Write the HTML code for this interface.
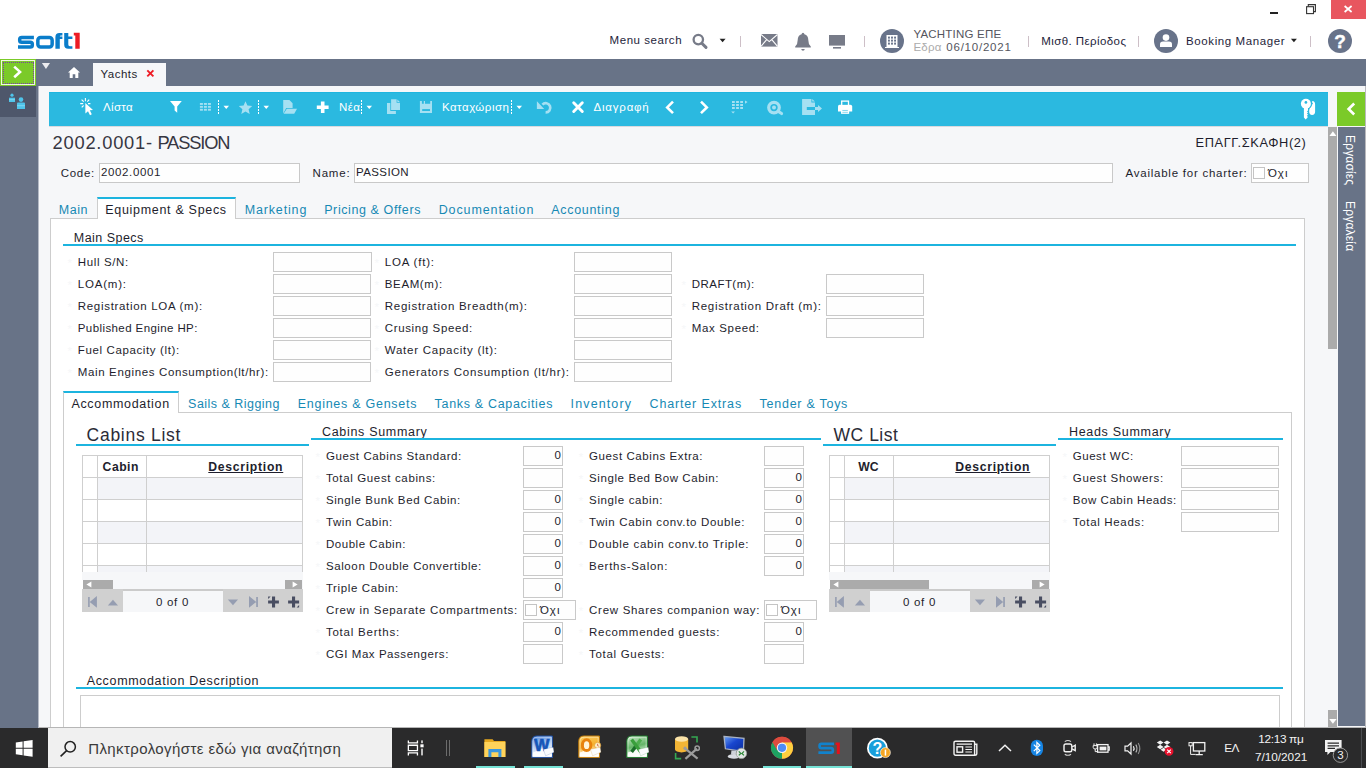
<!DOCTYPE html>
<html><head><meta charset="utf-8"><title>Yachts</title>
<style>
html,body{margin:0;padding:0;}
body{width:1366px;height:768px;overflow:hidden;position:relative;background:#fff;font-family:"Liberation Sans",sans-serif;}
.r{position:absolute;display:block;}
.t{position:absolute;white-space:nowrap;font-family:"Liberation Sans",sans-serif;}
</style></head><body>
<div class="r" style="left:0px;top:0px;width:1366px;height:59px;background:#ffffff;"></div>
<div class="r" style="left:0px;top:59px;width:1366px;height:27px;background:#687387;"></div>
<div class="r" style="left:39px;top:86px;width:1327px;height:1px;background:#a9afba;"></div>
<div class="r" style="left:0px;top:86px;width:39px;height:642px;background:#687387;"></div>
<div class="r" style="left:0px;top:85px;width:36px;height:32px;background:#4e576b;"></div>
<div class="r" style="left:39px;top:86px;width:1289px;height:642px;background:#f6f7f9;"></div>
<div class="r" style="left:1328px;top:86px;width:38px;height:642px;background:#f6f7f9;"></div>
<div class="r" style="left:1338px;top:127px;width:27px;height:599px;background:#687387;"></div>
<div class="r" style="left:1365px;top:86px;width:1px;height:642px;background:#b9b9bd;"></div>
<div class="r" style="left:1328px;top:127px;width:9px;height:222px;background:#ababab;"></div>
<div class="r" style="left:1337px;top:92px;width:28px;height:34px;background:#7bca29;"></div>
<div class="r" style="left:49px;top:92px;width:1279px;height:34px;background:#2bb9e0;"></div>
<div class="r" style="left:49px;top:92px;width:1279px;height:1px;background:#1fb5df;"></div>
<svg class="r" style="left:16px;top:31px;" width="66" height="20" viewBox="0 0 66 20">
<g fill="none" stroke="#0a7dca" stroke-width="3.5" stroke-linejoin="round">
<path d="M17.9,6.5 H5.7 Q3.7,6.5 3.7,8.2 V9.5 Q3.7,11.25 5.7,11.25 H14.3 Q16.3,11.25 16.3,13 V14.3 Q16.3,16.05 14.3,16.05 H2"/>
<rect x="21.85" y="6.5" width="14.3" height="9.55" rx="2.8"/>
</g>
<g fill="#0a7dca">
<path d="M39.4,17.8 V6 Q39.4,2 43.4,2 H46.4 V4.6 H45 Q43.8,4.6 43.8,5.6 H46.4 V8 H43.8 V17.8 Z"/>
<path d="M48.2,2 H52.3 V5.6 H56.4 V8 H52.3 V13.6 Q52.3,15.2 53.9,15.2 H56.4 V17.8 H52.2 Q48.2,17.8 48.2,13.8 Z"/>
</g>
<path fill="#ed1c24" d="M57.8,1.7 H63.7 V17.8 H59.3 V4.6 H57.8 Z"/>
</svg>
<div class="t " style="top:33px;font-size:11.5px;line-height:15px;color:#1e1e3a;left:609.60px;letter-spacing:0.547px;">Menu search</div>
<svg class="r" style="left:691px;top:32px;" width="18" height="18" viewBox="0 0 18 18"><circle cx="7.3" cy="7.6" r="4.7" fill="none" stroke="#777b88" stroke-width="2.3"/><path d="M10.8,11.2 L15,15.4" stroke="#777b88" stroke-width="3" stroke-linecap="round"/></svg>
<svg class="r" style="left:719px;top:38px;" width="8" height="5" viewBox="0 0 8 5"><path d="M0.6,0.8 H6.6 L3.6,4.2 Z" fill="#222"/></svg>
<div class="r" style="left:740px;top:36px;width:1px;height:11px;background:#cdbfc7;"></div>
<div class="r" style="left:864px;top:36px;width:1px;height:11px;background:#cdbfc7;"></div>
<div class="r" style="left:1028px;top:36px;width:1px;height:11px;background:#cdbfc7;"></div>
<div class="r" style="left:1138px;top:36px;width:1px;height:11px;background:#cdbfc7;"></div>
<div class="r" style="left:1310px;top:36px;width:1px;height:11px;background:#cdbfc7;"></div>
<svg class="r" style="left:760px;top:33px;" width="19" height="15" viewBox="0 0 19 15"><rect x="1" y="1" width="16.5" height="12.6" fill="#777b88"/><path d="M1,1.5 L9.25,8.6 L17.5,1.5 M1,13.4 L6.7,6.6 M17.5,13.4 L11.8,6.6" stroke="#fff" stroke-width="1.1" fill="none"/></svg>
<svg class="r" style="left:794px;top:32px;" width="18" height="20" viewBox="0 0 18 20"><path d="M9,0.7 Q10.3,0.7 10.4,2.2 Q14.3,3.3 14.3,8 Q14.3,12.5 16.8,14.6 V15.6 H1.2 V14.6 Q3.7,12.5 3.7,8 Q3.7,3.3 7.6,2.2 Q7.7,0.7 9,0.7 Z M7.2,17 H10.8 Q10.5,18.8 9,18.8 Q7.5,18.8 7.2,17 Z" fill="#777b88"/></svg>
<svg class="r" style="left:828px;top:34px;" width="18" height="16" viewBox="0 0 18 16"><rect x="1" y="1" width="16" height="10.6" fill="#777b88"/><rect x="5" y="13" width="8" height="1.6" fill="#777b88"/></svg>
<svg class="r" style="left:880px;top:29px;" width="24" height="24" viewBox="0 0 24 24"><circle cx="12" cy="12" r="12" fill="#68738a"/><path d="M6.5,6 H17.5 V18 H19 V19 H5 V18 H6.5 Z" fill="#fff"/><g fill="#68738a"><rect x="8" y="7.6" width="1.9" height="2"/><rect x="11.05" y="7.6" width="1.9" height="2"/><rect x="14.1" y="7.6" width="1.9" height="2"/><rect x="8" y="10.6" width="1.9" height="2"/><rect x="11.05" y="10.6" width="1.9" height="2"/><rect x="14.1" y="10.6" width="1.9" height="2"/><rect x="8" y="13.6" width="1.9" height="2"/><rect x="11.05" y="13.6" width="1.9" height="2"/><rect x="14.1" y="13.6" width="1.9" height="2"/></g></svg>
<div class="t " style="top:27px;font-size:11.5px;line-height:15px;color:#55565e;left:913.40px;letter-spacing:0.216px;">YACHTING ΕΠΕ</div>
<div class="t " style="top:40px;font-size:11.5px;line-height:15px;color:#ababab;left:913.40px;letter-spacing:0.259px;">Εδρα</div>
<div class="t " style="top:40px;font-size:11.5px;line-height:15px;color:#55565e;left:946.30px;letter-spacing:0.775px;">06/10/2021</div>
<div class="t " style="top:34px;font-size:11.5px;line-height:15px;color:#1e1e3a;left:1041.20px;letter-spacing:0.423px;">Μισθ. Περίοδος</div>
<svg class="r" style="left:1154px;top:29px;" width="24" height="24" viewBox="0 0 24 24"><circle cx="12" cy="12" r="12" fill="#68738a"/><circle cx="12" cy="8.6" r="3.3" fill="#fff"/><path d="M6,18 V15.2 Q6,12.6 9,12.6 H15 Q18,12.6 18,15.2 V18 Z" fill="#fff"/></svg>
<div class="t " style="top:34px;font-size:11.5px;line-height:15px;color:#1e1e3a;left:1186.00px;letter-spacing:0.604px;">Booking Manager</div>
<svg class="r" style="left:1290px;top:38px;" width="8" height="5" viewBox="0 0 8 5"><path d="M0.9,0.8 H6.9 L3.9,4.2 Z" fill="#222"/></svg>
<svg class="r" style="left:1328px;top:29px;" width="24" height="24" viewBox="0 0 24 24"><circle cx="12" cy="12" r="12" fill="#68738a"/><text x="12" y="18.8" text-anchor="middle" font-family="Liberation Sans" font-weight="bold" font-size="19" fill="#fff" stroke="#fff" stroke-width="0.4">?</text></svg>
<div class="r" style="left:1270px;top:11.5px;width:8.3px;height:2.6px;background:#222;"></div>
<svg class="r" style="left:1305px;top:3px;" width="12" height="12" viewBox="0 0 12 12"><path d="M3.3,3.6 V1.6 H10.4 V8.6 H8.4" fill="none" stroke="#333" stroke-width="1.1"/><rect x="1.6" y="3.7" width="6.9" height="6.9" fill="none" stroke="#333" stroke-width="1.1"/></svg>
<div class="r" style="left:1331px;top:0px;width:35px;height:19px;background:#e8565f;"></div>
<svg class="r" style="left:1343px;top:5px;" width="10" height="8" viewBox="0 0 10 8"><path d="M1.6,1 L8.6,7 M8.6,1 L1.6,7" stroke="#fff" stroke-width="1.7"/></svg>
<div class="r" style="left:0px;top:59px;width:36px;height:27px;background:#7bca29;box-shadow:inset 0 0 0 1px #7bca29, inset 0 0 0 2px #eef7e0;"></div>
<div class="r" style="left:3px;top:62px;width:30.5px;height:21.5px;border:1.5px dotted #7a3fa3;box-sizing:border-box;"></div>
<svg class="r" style="left:12px;top:64px;" width="12" height="16" viewBox="0 0 12 16"><path d="M2.2,2.6 L8,7.9 L2.2,13.2" fill="none" stroke="#fff" stroke-width="2.6" stroke-linejoin="miter"/></svg>
<svg class="r" style="left:41px;top:62px;" width="10" height="8" viewBox="0 0 10 8"><path d="M0.9,1.1 H9 L4.95,6.9 Z" fill="#ececef"/></svg>
<svg class="r" style="left:67px;top:66px;" width="14" height="13" viewBox="0 0 14 13"><path d="M7,0.9 L13,6.6 H11.3 V12 H8.3 V8.3 H5.7 V12 H2.7 V6.6 H1 Z" fill="#fff"/></svg>
<div class="r" style="left:93px;top:63px;width:73px;height:25px;background:#f6f7f9;"></div>
<div class="t " style="top:67px;font-size:11.5px;line-height:15px;color:#1e1e2d;left:100.60px;letter-spacing:0.449px;">Yachts</div>
<svg class="r" style="left:146px;top:69px;" width="9" height="9" viewBox="0 0 9 9"><path d="M1.3,1.3 L7.4,7.4 M7.4,1.3 L1.3,7.4" stroke="#ee1c25" stroke-width="1.9"/></svg>
<svg class="r" style="left:7px;top:92px;" width="22" height="20" viewBox="0 0 22 20"><g fill="#4fc4ea"><circle cx="5" cy="3.2" r="1.6"/><path d="M2,5.7 H8 V10 H2 Z"/><circle cx="14" cy="7.6" r="2.3"/><path d="M10,11.2 Q10,10.4 11,10.4 H17 Q18,10.4 18,11.2 V17 H10 Z"/></g><g fill="#7fd6f0"><rect x="2" y="7.2" width="6" height="1"/><rect x="10" y="13.2" width="8" height="1"/></g></svg>
<div class="r" style="left:37.5px;top:86px;width:1.5px;height:642px;background:linear-gradient(to right,#8a93a3,#dfe1e8);"></div>
<svg class="r" style="left:79px;top:97px;" width="16" height="19" viewBox="0 0 16 19"><g stroke="#fff" stroke-width="1.1" stroke-linecap="butt"><path d="M6.4,1 V4.2 M1.2,6.6 H4.2 M2.6,2.6 L4.7,4.7 M10.2,2.6 L8.3,4.6 M2.7,10.4 L4.6,8.5 M9,6.6 H11.4"/></g><path d="M6.3,6.1 L14,13 L10.8,13.3 L12.8,17.3 L11,18.2 L9,14.2 L6.4,16.4 Z" fill="#fff"/></svg>
<div class="t " style="top:100px;font-size:11.5px;line-height:15px;color:#ffffff;left:103.00px;letter-spacing:0.328px;">Λίστα</div>
<svg class="r" style="left:169px;top:100px;" width="14" height="14" viewBox="0 0 14 14"><path d="M1,1 H12.8 L8.2,6.4 V12.8 L5.6,10.6 V6.4 Z" fill="#fff"/></svg>
<svg class="r" style="left:199px;top:102px;" width="13" height="10" viewBox="0 0 13 10"><g fill="#a5e0f2"><rect x="0.9" y="1" width="3" height="1.9"/><rect x="4.9" y="1" width="3" height="1.9"/><rect x="8.9" y="1" width="3" height="1.9"/><rect x="0.9" y="3.9" width="3" height="1.9"/><rect x="4.9" y="3.9" width="3" height="1.9"/><rect x="8.9" y="3.9" width="3" height="1.9"/><rect x="0.9" y="6.8" width="3" height="1.9"/><rect x="4.9" y="6.8" width="3" height="1.9"/><rect x="8.9" y="6.8" width="3" height="1.9"/></g></svg>
<div class="r" style="left:218px;top:100px;width:1px;height:14px;background:repeating-linear-gradient(to bottom,#fff 0,#fff 2px,transparent 2px,transparent 3px);"></div>
<svg class="r" style="left:222.5px;top:105px;" width="7" height="5" viewBox="0 0 7 5"><path d="M0.5,0.7 H6 L3.25,4 Z" fill="#fff"/></svg>
<svg class="r" style="left:238px;top:100px;" width="15" height="15" viewBox="0 0 15 15"><path d="M7.5,1.2 L9.4,5.6 L14.2,6 L10.6,9.2 L11.7,13.9 L7.5,11.4 L3.3,13.9 L4.4,9.2 L0.8,6 L5.6,5.6 Z" fill="#a5e0f2"/></svg>
<div class="r" style="left:258px;top:100px;width:1px;height:14px;background:repeating-linear-gradient(to bottom,#fff 0,#fff 2px,transparent 2px,transparent 3px);"></div>
<svg class="r" style="left:262.5px;top:105px;" width="7" height="5" viewBox="0 0 7 5"><path d="M0.5,0.7 H6 L3.25,4 Z" fill="#fff"/></svg>
<svg class="r" style="left:282px;top:99px;" width="16" height="16" viewBox="0 0 16 16"><path d="M1.2,1 H7.4 L10.6,4.2 V9 H4.2 L1.2,14.4 Z" fill="#a5e0f2"/><path d="M4.8,9.8 H15 L12.2,14.8 H1.6 Z" fill="#a5e0f2"/></svg>
<svg class="r" style="left:316px;top:101px;" width="14" height="13" viewBox="0 0 14 13"><path d="M4.9,0.6 H8.5 V4.5 H12.6 V8.1 H8.5 V12 H4.9 V8.1 H0.8 V4.5 H4.9 Z" fill="#fff"/></svg>
<div class="t " style="top:100px;font-size:11.5px;line-height:15px;color:#ffffff;left:338.90px;letter-spacing:0.440px;">Νέα</div>
<div class="r" style="left:361px;top:100px;width:1px;height:14px;background:repeating-linear-gradient(to bottom,#fff 0,#fff 2px,transparent 2px,transparent 3px);"></div>
<svg class="r" style="left:366px;top:105px;" width="7" height="5" viewBox="0 0 7 5"><path d="M0.5,0.7 H6 L3.25,4 Z" fill="#fff"/></svg>
<svg class="r" style="left:386px;top:98px;" width="16" height="17" viewBox="0 0 16 17"><path d="M5.1,1.2 H10.6 V4.8 H14 V11.9 H5.1 Z" fill="#a5e0f2"/><path d="M11.4,1.4 L13.8,4 H11.4 Z" fill="#a5e0f2"/><path d="M1,5.1 H4.3 V13.1 H9.9 V15.9 H1 Z" fill="#a5e0f2"/></svg>
<svg class="r" style="left:419px;top:100px;" width="14" height="14" viewBox="0 0 14 14"><path d="M0.9,1 H2.9 V3.7 H4.8 V1 H6 V3.7 H11.2 V1 H13 V13 H0.9 Z" fill="#a5e0f2"/><rect x="3.2" y="9.1" width="7.8" height="1.9" fill="#2bb9e0"/></svg>
<div class="t " style="top:100px;font-size:11.5px;line-height:15px;color:#ffffff;left:441.90px;letter-spacing:0.510px;">Καταχώριση</div>
<div class="r" style="left:511px;top:100px;width:1px;height:14px;background:repeating-linear-gradient(to bottom,#fff 0,#fff 2px,transparent 2px,transparent 3px);"></div>
<svg class="r" style="left:515.7px;top:105px;" width="7" height="5" viewBox="0 0 7 5"><path d="M0.5,0.7 H6 L3.25,4 Z" fill="#fff"/></svg>
<svg class="r" style="left:536px;top:100px;" width="17" height="15" viewBox="0 0 17 15"><path d="M6.4,4.6 A4.6,4.6 0 1 1 9.6,12.4" fill="none" stroke="#a5e0f2" stroke-width="2.7"/><path d="M0.9,1.3 L8.2,8.9 H0.9 Z" fill="#a5e0f2"/></svg>
<svg class="r" style="left:571px;top:100px;" width="14" height="14" viewBox="0 0 14 14"><path d="M2.7,2.8 L11.3,11.5 M11.3,2.8 L2.7,11.5" stroke="#fff" stroke-width="2.9" stroke-linecap="round"/></svg>
<div class="t " style="top:100px;font-size:11.5px;line-height:15px;color:#ffffff;left:593.50px;letter-spacing:0.790px;">Διαγραφή</div>
<svg class="r" style="left:664px;top:100px;" width="12" height="15" viewBox="0 0 12 15"><path d="M9,1.6 L3.2,7.4 L9,13.2" fill="none" stroke="#fff" stroke-width="2.6"/></svg>
<svg class="r" style="left:698px;top:100px;" width="12" height="15" viewBox="0 0 12 15"><path d="M3,1.6 L8.8,7.4 L3,13.2" fill="none" stroke="#fff" stroke-width="2.6"/></svg>
<svg class="r" style="left:730px;top:100px;" width="19" height="15" viewBox="0 0 19 15"><g fill="#a5e0f2"><rect x="2" y="1" width="2.8" height="2"/><rect x="2" y="4" width="2.8" height="2"/><rect x="2" y="7" width="2.8" height="2"/><rect x="6.1" y="1" width="2.8" height="2"/><rect x="6.1" y="4" width="2.8" height="2"/><rect x="6.1" y="7" width="2.8" height="2"/><rect x="10.2" y="1" width="2.8" height="2"/><rect x="10.2" y="4" width="2.8" height="2"/><rect x="10.2" y="7" width="2.8" height="2"/><path d="M1.2,11.4 H5 L3.1,13.5 Z"/><path d="M15,0.4 V3.7 L17.6,2 Z"/></g></svg>
<svg class="r" style="left:766px;top:99.5px;" width="18" height="16" viewBox="0 0 18 16"><circle cx="8" cy="7.6" r="5.3" fill="none" stroke="#a5e0f2" stroke-width="3.2"/><circle cx="8" cy="7.6" r="2" fill="#a5e0f2"/><path d="M12,11.2 L15.6,13.6" stroke="#a5e0f2" stroke-width="3" stroke-linecap="round"/></svg>
<svg class="r" style="left:801px;top:98px;" width="22" height="18" viewBox="0 0 22 18"><path d="M1.1,0.9 H10.4 V4.4 H14 V9.1 H5.8 V11.9 H14 V17 H1.1 Z" fill="#a5e0f2"/><path d="M11.2,1 L13.9,3.6 H11.2 Z" fill="#a5e0f2"/><path d="M14,9.1 H17 V7 L21,10.5 L17,14 V11.9 H14 Z" fill="#a5e0f2"/></svg>
<svg class="r" style="left:837px;top:99.5px;" width="17" height="15" viewBox="0 0 17 15"><path d="M2.6,4.8 H13.4 Q15.2,4.8 15.2,6.6 V11.4 H1 V6.6 Q1,4.8 2.6,4.8 Z" fill="#fff"/><rect x="4.7" y="1.1" width="6.8" height="4.4" fill="#2bb9e0" stroke="#fff" stroke-width="1.3"/><rect x="4.7" y="9.8" width="6.8" height="3.4" fill="#2bb9e0" stroke="#fff" stroke-width="1.3"/><rect x="5" y="11.1" width="6" height="1.1" fill="#fff"/></svg>
<svg class="r" style="left:1300px;top:98px;" width="17" height="23" viewBox="0 0 17 23"><path d="M12.4,3.1 Q15.1,3.4 15.1,6.5 V13.8 Q15.1,16.9 12.1,16.9 Q9.2,16.9 9.2,13.8 V12.5 Q9.2,10.8 10.6,9.6 Q12.2,8 12,5.2 Q12,3.6 12.4,3.1 Z" fill="#fff"/><circle cx="5.9" cy="5.7" r="5.9" fill="#2bb9e0"/><circle cx="11.9" cy="5.4" r="1" fill="#2bb9e0"/><circle cx="5.9" cy="5.7" r="5" fill="#fff"/><circle cx="5.9" cy="4.4" r="1.35" fill="#2bb9e0"/><path d="M3.9,9 V19.6 L5.6,21.6 L7.6,19.6 V18.4 L6.8,17.8 L7.8,17 V16.2 L6.8,15.6 L7.8,14.8 V14 L6.8,13.4 L8,12.4 V9 Z" fill="#fff"/></svg>
<svg class="r" style="left:1345px;top:101px;" width="12" height="16" viewBox="0 0 12 16"><path d="M9.2,2.5 L3.6,8 L9.2,13.5" fill="none" stroke="#fff" stroke-width="2.6"/></svg>
<div class="r" style="left:49px;top:126px;width:1279px;height:1px;background:#d9dadf;"></div>
<div class="t " style="top:131px;font-size:18.3px;line-height:24px;color:#363642;left:52.60px;letter-spacing:0.770px;">2002.0001-</div>
<div class="t " style="top:131px;font-size:18.3px;line-height:24px;color:#363642;left:157.40px;letter-spacing:-1.143px;">PASSION</div>
<div class="t " style="top:134px;font-size:12.8px;line-height:17px;color:#1e1e2d;left:1195.50px;letter-spacing:0.623px;">ΕΠΑΓΓ.ΣΚΑΦΗ(2)</div>
<div class="t " style="top:166px;font-size:11.5px;line-height:15px;color:#1e1e2d;left:60.80px;letter-spacing:0.663px;">Code:</div>
<div class="r" style="left:99px;top:163px;width:201px;height:20px;background:#fefefe;border:1px solid #c9c9c9;box-sizing:border-box;"></div>
<div class="t " style="top:165px;font-size:11.5px;line-height:15px;color:#1e1e2d;left:101.00px;letter-spacing:0.627px;">2002.0001</div>
<div class="t " style="top:166px;font-size:11.5px;line-height:15px;color:#1e1e2d;left:312.50px;letter-spacing:0.826px;">Name:</div>
<div class="r" style="left:354px;top:163px;width:759px;height:20px;background:#fefefe;border:1px solid #c9c9c9;box-sizing:border-box;"></div>
<div class="t " style="top:165px;font-size:11.5px;line-height:15px;color:#1e1e2d;left:356.00px;letter-spacing:0.389px;">PASSION</div>
<div class="t " style="top:166px;font-size:11.5px;line-height:15px;color:#1e1e2d;left:1125.50px;letter-spacing:0.761px;">Available for charter:</div>
<div class="r" style="left:1251px;top:163px;width:58px;height:20px;background:#fefefe;border:1px solid #c9c9c9;box-sizing:border-box;"></div>
<div class="r" style="left:1253px;top:167px;width:12px;height:12px;background:#ffffff;border:1px solid #c4c4c4;box-sizing:border-box;"></div>
<div class="t " style="top:166px;font-size:11.5px;line-height:15px;color:#1e1e2d;left:1267.90px;letter-spacing:1.034px;">Όχι</div>
<div class="r" style="left:50px;top:218px;width:1255px;height:520px;background:#ffffff;border:1px solid #cdcdcd;box-sizing:border-box;"></div>
<div class="r" style="left:97px;top:197px;width:139px;height:22px;background:#ffffff;border:1px solid #cdcdcd;box-sizing:border-box;border-bottom:none;border-top:2px solid #1cb4df;"></div>
<div class="t " style="top:202px;font-size:12.5px;line-height:16px;color:#1689b4;left:58.80px;letter-spacing:0.526px;">Main</div>
<div class="t " style="top:202px;font-size:12.5px;line-height:16px;color:#1e1e2d;left:105.30px;letter-spacing:0.689px;">Equipment &amp; Specs</div>
<div class="t " style="top:202px;font-size:12.5px;line-height:16px;color:#1689b4;left:244.70px;letter-spacing:0.846px;">Marketing</div>
<div class="t " style="top:202px;font-size:12.5px;line-height:16px;color:#1689b4;left:324.20px;letter-spacing:0.594px;">Pricing &amp; Offers</div>
<div class="t " style="top:202px;font-size:12.5px;line-height:16px;color:#1689b4;left:438.70px;letter-spacing:0.886px;">Documentation</div>
<div class="t " style="top:202px;font-size:12.5px;line-height:16px;color:#1689b4;left:551.20px;letter-spacing:0.705px;">Accounting</div>
<div class="t " style="top:230px;font-size:12.5px;line-height:16px;color:#1e1e2d;left:73.80px;letter-spacing:0.469px;">Main Specs</div>
<div class="r" style="left:63px;top:244px;width:1233px;height:2px;background:#1cb4df;"></div>
<div class="t " style="top:255px;font-size:11.5px;line-height:15px;color:#1e1e2d;left:77.80px;letter-spacing:0.625px;">Hull S/N:</div>
<div class="t " style="top:256px;font-size:11.5px;line-height:15px;color:#f6f7f9;left:67.50px;">*</div>
<div class="r" style="left:273px;top:252px;width:99px;height:20px;background:#fefefe;border:1px solid #c9c9c9;box-sizing:border-box;"></div>
<div class="t " style="top:255px;font-size:11.5px;line-height:15px;color:#1e1e2d;left:384.80px;letter-spacing:0.798px;">LOA (ft):</div>
<div class="t " style="top:256px;font-size:11.5px;line-height:15px;color:#f6f7f9;left:374.50px;">*</div>
<div class="r" style="left:574px;top:252px;width:98px;height:20px;background:#fefefe;border:1px solid #c9c9c9;box-sizing:border-box;"></div>
<div class="t " style="top:277px;font-size:11.5px;line-height:15px;color:#1e1e2d;left:77.80px;letter-spacing:0.793px;">LOA(m):</div>
<div class="t " style="top:278px;font-size:11.5px;line-height:15px;color:#f6f7f9;left:67.50px;">*</div>
<div class="r" style="left:273px;top:274px;width:98px;height:20px;background:#fefefe;border:1px solid #c9c9c9;box-sizing:border-box;"></div>
<div class="t " style="top:277px;font-size:11.5px;line-height:15px;color:#1e1e2d;left:384.80px;letter-spacing:0.621px;">BEAM(m):</div>
<div class="t " style="top:278px;font-size:11.5px;line-height:15px;color:#f6f7f9;left:374.50px;">*</div>
<div class="r" style="left:574px;top:274px;width:98px;height:20px;background:#fefefe;border:1px solid #c9c9c9;box-sizing:border-box;"></div>
<div class="t " style="top:277px;font-size:11.5px;line-height:15px;color:#1e1e2d;left:691.70px;letter-spacing:0.471px;">DRAFT(m):</div>
<div class="t " style="top:278px;font-size:11.5px;line-height:15px;color:#f6f7f9;left:681.40px;">*</div>
<div class="r" style="left:826px;top:274px;width:98px;height:20px;background:#fefefe;border:1px solid #c9c9c9;box-sizing:border-box;"></div>
<div class="t " style="top:299px;font-size:11.5px;line-height:15px;color:#1e1e2d;left:77.80px;letter-spacing:0.687px;">Registration LOA (m):</div>
<div class="t " style="top:300px;font-size:11.5px;line-height:15px;color:#f6f7f9;left:67.50px;">*</div>
<div class="r" style="left:273px;top:296px;width:98px;height:20px;background:#fefefe;border:1px solid #c9c9c9;box-sizing:border-box;"></div>
<div class="t " style="top:299px;font-size:11.5px;line-height:15px;color:#1e1e2d;left:384.80px;letter-spacing:0.739px;">Registration Breadth(m):</div>
<div class="t " style="top:300px;font-size:11.5px;line-height:15px;color:#f6f7f9;left:374.50px;">*</div>
<div class="r" style="left:574px;top:296px;width:98px;height:20px;background:#fefefe;border:1px solid #c9c9c9;box-sizing:border-box;"></div>
<div class="t " style="top:299px;font-size:11.5px;line-height:15px;color:#1e1e2d;left:691.70px;letter-spacing:0.734px;">Registration Draft (m):</div>
<div class="t " style="top:300px;font-size:11.5px;line-height:15px;color:#f6f7f9;left:681.40px;">*</div>
<div class="r" style="left:826px;top:296px;width:98px;height:20px;background:#fefefe;border:1px solid #c9c9c9;box-sizing:border-box;"></div>
<div class="t " style="top:321px;font-size:11.5px;line-height:15px;color:#1e1e2d;left:77.80px;letter-spacing:0.406px;">Published Engine HP:</div>
<div class="t " style="top:322px;font-size:11.5px;line-height:15px;color:#f6f7f9;left:67.50px;">*</div>
<div class="r" style="left:273px;top:318px;width:98px;height:20px;background:#fefefe;border:1px solid #c9c9c9;box-sizing:border-box;"></div>
<div class="t " style="top:321px;font-size:11.5px;line-height:15px;color:#1e1e2d;left:384.80px;letter-spacing:0.624px;">Crusing Speed:</div>
<div class="t " style="top:322px;font-size:11.5px;line-height:15px;color:#f6f7f9;left:374.50px;">*</div>
<div class="r" style="left:574px;top:318px;width:98px;height:20px;background:#fefefe;border:1px solid #c9c9c9;box-sizing:border-box;"></div>
<div class="t " style="top:321px;font-size:11.5px;line-height:15px;color:#1e1e2d;left:691.70px;letter-spacing:0.663px;">Max Speed:</div>
<div class="t " style="top:322px;font-size:11.5px;line-height:15px;color:#f6f7f9;left:681.40px;">*</div>
<div class="r" style="left:826px;top:318px;width:98px;height:20px;background:#fefefe;border:1px solid #c9c9c9;box-sizing:border-box;"></div>
<div class="t " style="top:343px;font-size:11.5px;line-height:15px;color:#1e1e2d;left:77.80px;letter-spacing:0.626px;">Fuel Capacity (lt):</div>
<div class="t " style="top:344px;font-size:11.5px;line-height:15px;color:#f6f7f9;left:67.50px;">*</div>
<div class="r" style="left:273px;top:340px;width:98px;height:20px;background:#fefefe;border:1px solid #c9c9c9;box-sizing:border-box;"></div>
<div class="t " style="top:343px;font-size:11.5px;line-height:15px;color:#1e1e2d;left:384.80px;letter-spacing:0.751px;">Water Capacity (lt):</div>
<div class="t " style="top:344px;font-size:11.5px;line-height:15px;color:#f6f7f9;left:374.50px;">*</div>
<div class="r" style="left:574px;top:340px;width:98px;height:20px;background:#fefefe;border:1px solid #c9c9c9;box-sizing:border-box;"></div>
<div class="t " style="top:365px;font-size:11.5px;line-height:15px;color:#1e1e2d;left:77.80px;letter-spacing:0.636px;">Main Engines Consumption(lt/hr):</div>
<div class="t " style="top:366px;font-size:11.5px;line-height:15px;color:#f6f7f9;left:67.50px;">*</div>
<div class="r" style="left:273px;top:362px;width:98px;height:20px;background:#fefefe;border:1px solid #c9c9c9;box-sizing:border-box;"></div>
<div class="t " style="top:365px;font-size:11.5px;line-height:15px;color:#1e1e2d;left:384.80px;letter-spacing:0.752px;">Generators Consumption (lt/hr):</div>
<div class="t " style="top:366px;font-size:11.5px;line-height:15px;color:#f6f7f9;left:374.50px;">*</div>
<div class="r" style="left:574px;top:362px;width:98px;height:20px;background:#fefefe;border:1px solid #c9c9c9;box-sizing:border-box;"></div>
<div class="r" style="left:63px;top:412px;width:1229px;height:330px;background:#ffffff;border:1px solid #cdcdcd;box-sizing:border-box;"></div>
<div class="r" style="left:63px;top:391px;width:116px;height:22px;background:#ffffff;border:1px solid #cdcdcd;box-sizing:border-box;border-bottom:none;border-top:2px solid #1cb4df;"></div>
<div class="t " style="top:396px;font-size:12.5px;line-height:16px;color:#1e1e2d;left:71.40px;letter-spacing:0.675px;">Accommodation</div>
<div class="t " style="top:396px;font-size:12.5px;line-height:16px;color:#1689b4;left:188.10px;letter-spacing:0.469px;">Sails &amp; Rigging</div>
<div class="t " style="top:396px;font-size:12.5px;line-height:16px;color:#1689b4;left:297.70px;letter-spacing:0.735px;">Engines &amp; Gensets</div>
<div class="t " style="top:396px;font-size:12.5px;line-height:16px;color:#1689b4;left:434.60px;letter-spacing:0.678px;">Tanks &amp; Capacities</div>
<div class="t " style="top:396px;font-size:12.5px;line-height:16px;color:#1689b4;left:570.60px;letter-spacing:1.120px;">Inventory</div>
<div class="t " style="top:396px;font-size:12.5px;line-height:16px;color:#1689b4;left:649.50px;letter-spacing:0.851px;">Charter Extras</div>
<div class="t " style="top:396px;font-size:12.5px;line-height:16px;color:#1689b4;left:759.60px;letter-spacing:0.732px;">Tender &amp; Toys</div>
<div class="r" style="left:76px;top:444px;width:233px;height:2px;background:#1cb4df;"></div>
<div class="t " style="top:424px;font-size:17.5px;line-height:23px;color:#2b2b36;left:86.60px;letter-spacing:0.721px;">Cabins List</div>
<div class="r" style="left:82px;top:455px;width:221px;height:117px;background:#ffffff;"></div>
<div class="r" style="left:98px;top:478px;width:204px;height:21px;background:#f3f4f8;"></div>
<div class="r" style="left:98px;top:522px;width:204px;height:21px;background:#f3f4f8;"></div>
<div class="r" style="left:98px;top:566px;width:204px;height:6px;background:#f3f4f8;"></div>
<div class="r" style="left:82px;top:455px;width:221px;height:1px;background:#cfcfcf;"></div>
<div class="r" style="left:82px;top:477px;width:221px;height:1px;background:#cfcfcf;"></div>
<div class="r" style="left:82px;top:499px;width:221px;height:1px;background:#cfcfcf;"></div>
<div class="r" style="left:82px;top:521px;width:221px;height:1px;background:#cfcfcf;"></div>
<div class="r" style="left:82px;top:543px;width:221px;height:1px;background:#cfcfcf;"></div>
<div class="r" style="left:82px;top:565px;width:221px;height:1px;background:#cfcfcf;"></div>
<div class="r" style="left:82px;top:455px;width:1px;height:117px;background:#cfcfcf;"></div>
<div class="r" style="left:97px;top:455px;width:1px;height:117px;background:#cfcfcf;"></div>
<div class="r" style="left:146px;top:455px;width:1px;height:117px;background:#cfcfcf;"></div>
<div class="r" style="left:302px;top:455px;width:1px;height:117px;background:#cfcfcf;"></div>
<div class="t " style="top:459px;font-size:12.2px;line-height:16px;color:#1e1e2d;left:102.60px;letter-spacing:0.502px;font-weight:bold;">Cabin</div>
<div class="t " style="top:459px;font-size:12.2px;line-height:16px;color:#1e1e2d;left:208.30px;letter-spacing:0.718px;font-weight:bold;text-decoration:underline;text-underline-offset:1px;">Description</div>
<div class="r" style="left:82px;top:572px;width:221px;height:8px;background:#f6f7f9;"></div>
<div class="r" style="left:83px;top:580px;width:220px;height:9px;background:#f6f7f9;"></div>
<div class="r" style="left:83px;top:580px;width:30px;height:9px;background:#ababab;"></div>
<div class="r" style="left:285px;top:580px;width:17px;height:9px;background:#ababab;"></div>
<svg class="r" style="left:85.4px;top:581px;" width="8" height="7" viewBox="0 0 8 7"><path d="M6.4,0.5 V6.5 L1.4,3.5 Z" fill="#fff"/></svg>
<svg class="r" style="left:290px;top:581px;" width="8" height="7" viewBox="0 0 8 7"><path d="M2.6,0.5 V6.5 L7.6,3.5 Z" fill="#fff"/></svg>
<div class="r" style="left:82px;top:589px;width:221px;height:23px;background:#f6f7f9;"></div>
<div class="r" style="left:82px;top:589px;width:221px;height:1.5px;background:#cbcbcb;"></div>
<div class="r" style="left:82px;top:589px;width:41px;height:23px;background:#d0d0d0;"></div>
<div class="r" style="left:223px;top:589px;width:80px;height:23px;background:#d0d0d0;"></div>
<svg class="r" style="left:87px;top:595px;" width="12" height="14" viewBox="0 0 12 14"><path d="M1.1,1.9 H2.7 V12 H1.1 Z M9.9,1 V12.8 L2.7,6.9 Z" fill="#959db1"/></svg>
<svg class="r" style="left:107px;top:598.5px;" width="12" height="8" viewBox="0 0 12 8"><path d="M0.9,6.5 H11 L5.95,0.8 Z" fill="#959db1"/></svg>
<svg class="r" style="left:227px;top:598.5px;" width="12" height="8" viewBox="0 0 12 8"><path d="M0.9,0.5 H11 L5.95,6.3 Z" fill="#959db1"/></svg>
<svg class="r" style="left:248px;top:595px;" width="12" height="14" viewBox="0 0 12 14"><path d="M8.2,1.9 H9.9 V12 H8.2 Z M1,1 V12.8 L8.2,6.9 Z" fill="#959db1"/></svg>
<svg class="r" style="left:268px;top:595.5px;" width="12" height="12" viewBox="0 0 12 12"><path d="M4,0.5 H7.1 V4.5 H10.9 V7.6 H7.1 V11.5 H4 V7.6 H0.1 V4.5 H4 Z" fill="#494e62"/><path d="M0.1,0.5 H2.6 L0.1,3 Z" fill="#494e62"/></svg>
<svg class="r" style="left:288px;top:595.5px;" width="12" height="12" viewBox="0 0 12 12"><path d="M4,0.5 H7.1 V4.5 H11.1 V7.6 H7.1 V11.5 H4 V7.6 H0.1 V4.5 H4 Z" fill="#494e62"/><path d="M11.1,9 V11.5 H8.6 Z" fill="#494e62"/></svg>
<div class="t " style="top:595px;font-size:11.5px;line-height:15px;color:#1e1e2d;left:156.00px;letter-spacing:0.705px;">0 of 0</div>
<div class="r" style="left:823px;top:444px;width:233px;height:2px;background:#1cb4df;"></div>
<div class="t " style="top:424px;font-size:17.5px;line-height:23px;color:#2b2b36;left:833.60px;letter-spacing:0.507px;">WC List</div>
<div class="r" style="left:829px;top:455px;width:221px;height:117px;background:#ffffff;"></div>
<div class="r" style="left:845px;top:478px;width:204px;height:21px;background:#f3f4f8;"></div>
<div class="r" style="left:845px;top:522px;width:204px;height:21px;background:#f3f4f8;"></div>
<div class="r" style="left:845px;top:566px;width:204px;height:6px;background:#f3f4f8;"></div>
<div class="r" style="left:829px;top:455px;width:221px;height:1px;background:#cfcfcf;"></div>
<div class="r" style="left:829px;top:477px;width:221px;height:1px;background:#cfcfcf;"></div>
<div class="r" style="left:829px;top:499px;width:221px;height:1px;background:#cfcfcf;"></div>
<div class="r" style="left:829px;top:521px;width:221px;height:1px;background:#cfcfcf;"></div>
<div class="r" style="left:829px;top:543px;width:221px;height:1px;background:#cfcfcf;"></div>
<div class="r" style="left:829px;top:565px;width:221px;height:1px;background:#cfcfcf;"></div>
<div class="r" style="left:829px;top:455px;width:1px;height:117px;background:#cfcfcf;"></div>
<div class="r" style="left:844px;top:455px;width:1px;height:117px;background:#cfcfcf;"></div>
<div class="r" style="left:893px;top:455px;width:1px;height:117px;background:#cfcfcf;"></div>
<div class="r" style="left:1049px;top:455px;width:1px;height:117px;background:#cfcfcf;"></div>
<div class="t " style="top:459px;font-size:12.2px;line-height:16px;color:#1e1e2d;left:858.20px;letter-spacing:0.038px;font-weight:bold;">WC</div>
<div class="t " style="top:459px;font-size:12.2px;line-height:16px;color:#1e1e2d;left:955.30px;letter-spacing:0.718px;font-weight:bold;text-decoration:underline;text-underline-offset:1px;">Description</div>
<div class="r" style="left:829px;top:572px;width:221px;height:8px;background:#f6f7f9;"></div>
<div class="r" style="left:830px;top:580px;width:220px;height:9px;background:#f6f7f9;"></div>
<div class="r" style="left:830px;top:580px;width:99px;height:9px;background:#ababab;"></div>
<div class="r" style="left:1032px;top:580px;width:17px;height:9px;background:#ababab;"></div>
<svg class="r" style="left:832.4px;top:581px;" width="8" height="7" viewBox="0 0 8 7"><path d="M6.4,0.5 V6.5 L1.4,3.5 Z" fill="#fff"/></svg>
<svg class="r" style="left:1037px;top:581px;" width="8" height="7" viewBox="0 0 8 7"><path d="M2.6,0.5 V6.5 L7.6,3.5 Z" fill="#fff"/></svg>
<div class="r" style="left:829px;top:589px;width:221px;height:23px;background:#f6f7f9;"></div>
<div class="r" style="left:829px;top:589px;width:221px;height:1.5px;background:#cbcbcb;"></div>
<div class="r" style="left:829px;top:589px;width:41px;height:23px;background:#d0d0d0;"></div>
<div class="r" style="left:970px;top:589px;width:80px;height:23px;background:#d0d0d0;"></div>
<svg class="r" style="left:834px;top:595px;" width="12" height="14" viewBox="0 0 12 14"><path d="M1.1,1.9 H2.7 V12 H1.1 Z M9.9,1 V12.8 L2.7,6.9 Z" fill="#959db1"/></svg>
<svg class="r" style="left:854px;top:598.5px;" width="12" height="8" viewBox="0 0 12 8"><path d="M0.9,6.5 H11 L5.95,0.8 Z" fill="#959db1"/></svg>
<svg class="r" style="left:974px;top:598.5px;" width="12" height="8" viewBox="0 0 12 8"><path d="M0.9,0.5 H11 L5.95,6.3 Z" fill="#959db1"/></svg>
<svg class="r" style="left:995px;top:595px;" width="12" height="14" viewBox="0 0 12 14"><path d="M8.2,1.9 H9.9 V12 H8.2 Z M1,1 V12.8 L8.2,6.9 Z" fill="#959db1"/></svg>
<svg class="r" style="left:1015px;top:595.5px;" width="12" height="12" viewBox="0 0 12 12"><path d="M4,0.5 H7.1 V4.5 H10.9 V7.6 H7.1 V11.5 H4 V7.6 H0.1 V4.5 H4 Z" fill="#494e62"/><path d="M0.1,0.5 H2.6 L0.1,3 Z" fill="#494e62"/></svg>
<svg class="r" style="left:1035px;top:595.5px;" width="12" height="12" viewBox="0 0 12 12"><path d="M4,0.5 H7.1 V4.5 H11.1 V7.6 H7.1 V11.5 H4 V7.6 H0.1 V4.5 H4 Z" fill="#494e62"/><path d="M11.1,9 V11.5 H8.6 Z" fill="#494e62"/></svg>
<div class="t " style="top:595px;font-size:11.5px;line-height:15px;color:#1e1e2d;left:903.00px;letter-spacing:0.705px;">0 of 0</div>
<div class="t " style="top:424px;font-size:12.5px;line-height:16px;color:#1e1e2d;left:322.00px;letter-spacing:0.688px;">Cabins Summary</div>
<div class="r" style="left:311px;top:438px;width:510px;height:2px;background:#1cb4df;"></div>
<div class="t " style="top:449px;font-size:11.5px;line-height:15px;color:#1e1e2d;left:325.90px;letter-spacing:0.603px;">Guest Cabins Standard:</div>
<div class="t " style="top:450px;font-size:11.5px;line-height:15px;color:#f6f7f9;left:315.60px;">*</div>
<div class="r" style="left:523px;top:446px;width:40px;height:20px;background:#fefefe;border:1px solid #c9c9c9;box-sizing:border-box;"></div>
<div class="t " style="top:448px;font-size:11.5px;line-height:15px;color:#1e1e2d;right:805.20px;">0</div>
<div class="t " style="top:449px;font-size:11.5px;line-height:15px;color:#1e1e2d;left:589.10px;letter-spacing:0.584px;">Guest Cabins Extra:</div>
<div class="t " style="top:450px;font-size:11.5px;line-height:15px;color:#f6f7f9;left:578.80px;">*</div>
<div class="r" style="left:764px;top:446px;width:40px;height:20px;background:#fefefe;border:1px solid #c9c9c9;box-sizing:border-box;"></div>
<div class="t " style="top:471px;font-size:11.5px;line-height:15px;color:#1e1e2d;left:325.90px;letter-spacing:0.642px;">Total Guest cabins:</div>
<div class="t " style="top:472px;font-size:11.5px;line-height:15px;color:#f6f7f9;left:315.60px;">*</div>
<div class="r" style="left:523px;top:468px;width:40px;height:20px;background:#fefefe;border:1px solid #c9c9c9;box-sizing:border-box;"></div>
<div class="t " style="top:471px;font-size:11.5px;line-height:15px;color:#1e1e2d;left:589.10px;letter-spacing:0.589px;">Single Bed Bow Cabin:</div>
<div class="t " style="top:472px;font-size:11.5px;line-height:15px;color:#f6f7f9;left:578.80px;">*</div>
<div class="r" style="left:764px;top:468px;width:40px;height:20px;background:#fefefe;border:1px solid #c9c9c9;box-sizing:border-box;"></div>
<div class="t " style="top:470px;font-size:11.5px;line-height:15px;color:#1e1e2d;right:564.20px;">0</div>
<div class="t " style="top:493px;font-size:11.5px;line-height:15px;color:#1e1e2d;left:325.90px;letter-spacing:0.615px;">Single Bunk Bed Cabin:</div>
<div class="t " style="top:494px;font-size:11.5px;line-height:15px;color:#f6f7f9;left:315.60px;">*</div>
<div class="r" style="left:523px;top:490px;width:40px;height:20px;background:#fefefe;border:1px solid #c9c9c9;box-sizing:border-box;"></div>
<div class="t " style="top:492px;font-size:11.5px;line-height:15px;color:#1e1e2d;right:805.20px;">0</div>
<div class="t " style="top:493px;font-size:11.5px;line-height:15px;color:#1e1e2d;left:589.10px;letter-spacing:0.627px;">Single cabin:</div>
<div class="t " style="top:494px;font-size:11.5px;line-height:15px;color:#f6f7f9;left:578.80px;">*</div>
<div class="r" style="left:764px;top:490px;width:40px;height:20px;background:#fefefe;border:1px solid #c9c9c9;box-sizing:border-box;"></div>
<div class="t " style="top:492px;font-size:11.5px;line-height:15px;color:#1e1e2d;right:564.20px;">0</div>
<div class="t " style="top:515px;font-size:11.5px;line-height:15px;color:#1e1e2d;left:325.90px;letter-spacing:0.629px;">Twin Cabin:</div>
<div class="t " style="top:516px;font-size:11.5px;line-height:15px;color:#f6f7f9;left:315.60px;">*</div>
<div class="r" style="left:523px;top:512px;width:40px;height:20px;background:#fefefe;border:1px solid #c9c9c9;box-sizing:border-box;"></div>
<div class="t " style="top:514px;font-size:11.5px;line-height:15px;color:#1e1e2d;right:805.20px;">0</div>
<div class="t " style="top:515px;font-size:11.5px;line-height:15px;color:#1e1e2d;left:589.10px;letter-spacing:0.649px;">Twin Cabin conv.to Double:</div>
<div class="t " style="top:516px;font-size:11.5px;line-height:15px;color:#f6f7f9;left:578.80px;">*</div>
<div class="r" style="left:764px;top:512px;width:40px;height:20px;background:#fefefe;border:1px solid #c9c9c9;box-sizing:border-box;"></div>
<div class="t " style="top:514px;font-size:11.5px;line-height:15px;color:#1e1e2d;right:564.20px;">0</div>
<div class="t " style="top:537px;font-size:11.5px;line-height:15px;color:#1e1e2d;left:325.90px;letter-spacing:0.548px;">Double Cabin:</div>
<div class="t " style="top:538px;font-size:11.5px;line-height:15px;color:#f6f7f9;left:315.60px;">*</div>
<div class="r" style="left:523px;top:534px;width:40px;height:20px;background:#fefefe;border:1px solid #c9c9c9;box-sizing:border-box;"></div>
<div class="t " style="top:536px;font-size:11.5px;line-height:15px;color:#1e1e2d;right:805.20px;">0</div>
<div class="t " style="top:537px;font-size:11.5px;line-height:15px;color:#1e1e2d;left:589.10px;letter-spacing:0.677px;">Double cabin conv.to Triple:</div>
<div class="t " style="top:538px;font-size:11.5px;line-height:15px;color:#f6f7f9;left:578.80px;">*</div>
<div class="r" style="left:764px;top:534px;width:40px;height:20px;background:#fefefe;border:1px solid #c9c9c9;box-sizing:border-box;"></div>
<div class="t " style="top:536px;font-size:11.5px;line-height:15px;color:#1e1e2d;right:564.20px;">0</div>
<div class="t " style="top:559px;font-size:11.5px;line-height:15px;color:#1e1e2d;left:325.90px;letter-spacing:0.615px;">Saloon Double Convertible:</div>
<div class="t " style="top:560px;font-size:11.5px;line-height:15px;color:#f6f7f9;left:315.60px;">*</div>
<div class="r" style="left:523px;top:556px;width:40px;height:20px;background:#fefefe;border:1px solid #c9c9c9;box-sizing:border-box;"></div>
<div class="t " style="top:558px;font-size:11.5px;line-height:15px;color:#1e1e2d;right:805.20px;">0</div>
<div class="t " style="top:559px;font-size:11.5px;line-height:15px;color:#1e1e2d;left:589.10px;letter-spacing:0.717px;">Berths-Salon:</div>
<div class="t " style="top:560px;font-size:11.5px;line-height:15px;color:#f6f7f9;left:578.80px;">*</div>
<div class="r" style="left:764px;top:556px;width:40px;height:20px;background:#fefefe;border:1px solid #c9c9c9;box-sizing:border-box;"></div>
<div class="t " style="top:558px;font-size:11.5px;line-height:15px;color:#1e1e2d;right:564.20px;">0</div>
<div class="t " style="top:581px;font-size:11.5px;line-height:15px;color:#1e1e2d;left:325.90px;letter-spacing:0.633px;">Triple Cabin:</div>
<div class="t " style="top:582px;font-size:11.5px;line-height:15px;color:#f6f7f9;left:315.60px;">*</div>
<div class="r" style="left:523px;top:578px;width:40px;height:20px;background:#fefefe;border:1px solid #c9c9c9;box-sizing:border-box;"></div>
<div class="t " style="top:580px;font-size:11.5px;line-height:15px;color:#1e1e2d;right:805.20px;">0</div>
<div class="t " style="top:603px;font-size:11.5px;line-height:15px;color:#1e1e2d;left:325.90px;letter-spacing:0.712px;">Crew in Separate Compartments:</div>
<div class="t " style="top:604px;font-size:11.5px;line-height:15px;color:#f6f7f9;left:315.60px;">*</div>
<div class="r" style="left:523px;top:600px;width:53px;height:20px;background:#fefefe;border:1px solid #c9c9c9;box-sizing:border-box;"></div>
<div class="r" style="left:525px;top:604px;width:12px;height:12px;background:#ffffff;border:1px solid #c4c4c4;box-sizing:border-box;"></div>
<div class="t " style="top:603px;font-size:11.5px;line-height:15px;color:#1e1e2d;left:539.90px;letter-spacing:1.034px;">Όχι</div>
<div class="t " style="top:603px;font-size:11.5px;line-height:15px;color:#1e1e2d;left:589.10px;letter-spacing:0.701px;">Crew Shares companion way:</div>
<div class="t " style="top:604px;font-size:11.5px;line-height:15px;color:#f6f7f9;left:578.80px;">*</div>
<div class="r" style="left:764px;top:600px;width:53px;height:20px;background:#fefefe;border:1px solid #c9c9c9;box-sizing:border-box;"></div>
<div class="r" style="left:766px;top:604px;width:12px;height:12px;background:#ffffff;border:1px solid #c4c4c4;box-sizing:border-box;"></div>
<div class="t " style="top:603px;font-size:11.5px;line-height:15px;color:#1e1e2d;left:780.90px;letter-spacing:1.034px;">Όχι</div>
<div class="t " style="top:625px;font-size:11.5px;line-height:15px;color:#1e1e2d;left:325.90px;letter-spacing:0.775px;">Total Berths:</div>
<div class="t " style="top:626px;font-size:11.5px;line-height:15px;color:#f6f7f9;left:315.60px;">*</div>
<div class="r" style="left:523px;top:622px;width:40px;height:20px;background:#fefefe;border:1px solid #c9c9c9;box-sizing:border-box;"></div>
<div class="t " style="top:624px;font-size:11.5px;line-height:15px;color:#1e1e2d;right:805.20px;">0</div>
<div class="t " style="top:625px;font-size:11.5px;line-height:15px;color:#1e1e2d;left:589.10px;letter-spacing:0.671px;">Recommended guests:</div>
<div class="t " style="top:626px;font-size:11.5px;line-height:15px;color:#f6f7f9;left:578.80px;">*</div>
<div class="r" style="left:764px;top:622px;width:40px;height:20px;background:#fefefe;border:1px solid #c9c9c9;box-sizing:border-box;"></div>
<div class="t " style="top:624px;font-size:11.5px;line-height:15px;color:#1e1e2d;right:564.20px;">0</div>
<div class="t " style="top:647px;font-size:11.5px;line-height:15px;color:#1e1e2d;left:325.90px;letter-spacing:0.553px;">CGI Max Passengers:</div>
<div class="t " style="top:648px;font-size:11.5px;line-height:15px;color:#f6f7f9;left:315.60px;">*</div>
<div class="r" style="left:523px;top:644px;width:40px;height:20px;background:#fefefe;border:1px solid #c9c9c9;box-sizing:border-box;"></div>
<div class="t " style="top:647px;font-size:11.5px;line-height:15px;color:#1e1e2d;left:589.10px;letter-spacing:0.684px;">Total Guests:</div>
<div class="t " style="top:648px;font-size:11.5px;line-height:15px;color:#f6f7f9;left:578.80px;">*</div>
<div class="r" style="left:764px;top:644px;width:40px;height:20px;background:#fefefe;border:1px solid #c9c9c9;box-sizing:border-box;"></div>
<div class="t " style="top:424px;font-size:12.5px;line-height:16px;color:#1e1e2d;left:1068.90px;letter-spacing:0.709px;">Heads Summary</div>
<div class="r" style="left:1058px;top:438px;width:225px;height:2px;background:#1cb4df;"></div>
<div class="t " style="top:449px;font-size:11.5px;line-height:15px;color:#1e1e2d;left:1072.80px;letter-spacing:0.530px;">Guest WC:</div>
<div class="t " style="top:450px;font-size:11.5px;line-height:15px;color:#f6f7f9;left:1062.50px;">*</div>
<div class="r" style="left:1181px;top:446px;width:98px;height:20px;background:#fefefe;border:1px solid #c9c9c9;box-sizing:border-box;"></div>
<div class="t " style="top:471px;font-size:11.5px;line-height:15px;color:#1e1e2d;left:1072.80px;letter-spacing:0.656px;">Guest Showers:</div>
<div class="t " style="top:472px;font-size:11.5px;line-height:15px;color:#f6f7f9;left:1062.50px;">*</div>
<div class="r" style="left:1181px;top:468px;width:98px;height:20px;background:#fefefe;border:1px solid #c9c9c9;box-sizing:border-box;"></div>
<div class="t " style="top:493px;font-size:11.5px;line-height:15px;color:#1e1e2d;left:1072.80px;letter-spacing:0.547px;">Bow Cabin Heads:</div>
<div class="t " style="top:494px;font-size:11.5px;line-height:15px;color:#f6f7f9;left:1062.50px;">*</div>
<div class="r" style="left:1181px;top:490px;width:98px;height:20px;background:#fefefe;border:1px solid #c9c9c9;box-sizing:border-box;"></div>
<div class="t " style="top:515px;font-size:11.5px;line-height:15px;color:#1e1e2d;left:1072.80px;letter-spacing:0.673px;">Total Heads:</div>
<div class="t " style="top:516px;font-size:11.5px;line-height:15px;color:#f6f7f9;left:1062.50px;">*</div>
<div class="r" style="left:1181px;top:512px;width:98px;height:20px;background:#fefefe;border:1px solid #c9c9c9;box-sizing:border-box;"></div>
<div class="t " style="top:673px;font-size:12.5px;line-height:16px;color:#1e1e2d;left:86.70px;letter-spacing:0.675px;">Accommodation Description</div>
<div class="r" style="left:76px;top:687px;width:1207px;height:2px;background:#1cb4df;"></div>
<div class="r" style="left:80px;top:695px;width:1200px;height:60px;background:#ffffff;border:1px solid #cdcdcd;box-sizing:border-box;"></div>
<svg class="r" style="left:1329px;top:130px;" width="8" height="7" viewBox="0 0 8 7"><path d="M0.4,6 H7.4 L3.9,1.2 Z" fill="#fff"/></svg>
<div class="r" style="left:1328px;top:710px;width:9px;height:17px;background:#ababab;"></div>
<svg class="r" style="left:1329px;top:717.5px;" width="8" height="7" viewBox="0 0 8 7"><path d="M0.2,0.9 H7.6 L3.9,5.8 Z" fill="#fff"/></svg>
<div class="t" style="left:1358.4px;top:134.5px;font-size:12px;line-height:16px;color:#fff;letter-spacing:0.166px;transform-origin:0 0;transform:rotate(90deg);">Εργασίες</div>
<div class="t" style="left:1358.4px;top:200.7px;font-size:12px;line-height:16px;color:#fff;letter-spacing:0.197px;transform-origin:0 0;transform:rotate(90deg);">Εργαλεία</div>
<div class="r" style="left:39px;top:727px;width:1327px;height:1px;background:#b6b6b6;"></div>
<div class="r" style="left:0px;top:728px;width:1366px;height:40px;background:#2a2a2b;"></div>
<svg class="r" style="left:15px;top:739px;" width="19" height="19" viewBox="0 0 19 19"><path d="M0.8,3.4 L7.6,2.4 V8.8 H0.8 Z M8.6,2.2 L17.6,0.9 V8.8 H8.6 Z M0.8,9.8 H7.6 V16.2 L0.8,15.2 Z M8.6,9.8 H17.6 V17.7 L8.6,16.4 Z" fill="#fff"/></svg>
<div class="r" style="left:48px;top:728px;width:344px;height:40px;background:#f0f0f0;border-bottom:1px solid #bdbdbd;box-sizing:border-box;"></div>
<svg class="r" style="left:59px;top:740px;" width="19" height="18" viewBox="0 0 19 18"><circle cx="11.2" cy="6.8" r="5.2" fill="none" stroke="#222" stroke-width="1.5"/><path d="M7.6,10.6 L1.6,16.4" stroke="#222" stroke-width="1.6"/></svg>
<div class="t " style="top:739px;font-size:15px;line-height:20px;color:#3a3a3a;left:88.20px;letter-spacing:0.401px;">Πληκτρολογήστε εδώ για αναζήτηση</div>
<svg class="r" style="left:407px;top:740px;" width="18" height="16" viewBox="0 0 18 16"><g fill="#fff"><path d="M0.7,0.4 H2 V2.2 H9.8 V0.4 H11.1 V3.5 H0.7 Z"/><path d="M0.7,15.4 H2 V13.6 H9.8 V15.4 H11.1 V12.3 H0.7 Z"/><path d="M0.7,4.6 H11.1 V11.2 H0.7 Z M2,5.9 V9.9 H9.8 V5.9 Z" fill-rule="evenodd"/><rect x="14.3" y="0.4" width="1.4" height="2.8"/><rect x="13.4" y="4.3" width="3.2" height="3"/><rect x="14.3" y="8.6" width="1.4" height="6.8"/></g></svg>
<div class="r" style="left:446px;top:740px;width:1px;height:16px;background:#6c6c6c;"></div>
<div class="r" style="left:449px;top:740px;width:1px;height:16px;background:#6c6c6c;"></div>
<div class="r" style="left:476px;top:766px;width:39px;height:2px;background:#76e3d6;"></div>
<div class="r" style="left:524px;top:766px;width:39px;height:2px;background:#76e3d6;"></div>
<div class="r" style="left:763px;top:766px;width:38px;height:2px;background:#76e3d6;"></div>
<div class="r" style="left:806px;top:728px;width:46px;height:38px;background:#515152;"></div>
<div class="r" style="left:806px;top:766px;width:46px;height:2px;background:#76e3d6;"></div>
<svg class="r" style="left:484px;top:738px;" width="22" height="20" viewBox="0 0 22 20"><path d="M0.4,1.2 H8.6 L10,3 H21.4 V19 H0.4 Z" fill="#e7a91f"/><path d="M0.4,4 H21.4 V19 H0.4 Z" fill="#ffd35a"/><path d="M4.4,11 H17.4 V19 H14.4 V14.2 H7.4 V19 H4.4 Z" fill="#3b97de"/></svg>
<svg class="r" style="left:531px;top:735px;" width="24" height="24" viewBox="0 0 24 24"><defs><linearGradient id="wg" x1="0" y1="0" x2="0.25" y2="1"><stop offset="0" stop-color="#4f86dc"/><stop offset="0.55" stop-color="#bcd3f4"/><stop offset="1" stop-color="#ffffff"/></linearGradient></defs><path d="M6,1 H21.4 V22.4 H0.8 V6.2 Q0.8,1 6,1 Z" fill="url(#wg)" stroke="#1c4c9e" stroke-width="1"/><path d="M6.2,2.2 H20.2 V21.2 H2 V6.4 Q2,2.2 6.2,2.2 Z" fill="none" stroke="#ffffff" stroke-opacity="0.55" stroke-width="0.8"/><path d="M2,17.4 L13,13 L20.6,18.2 V21.4 H2 Z" fill="#ffffff" opacity="0.9"/><text x="10.8" y="16.4" text-anchor="middle" font-family="Liberation Sans" font-weight="bold" font-size="16" fill="#1556b8" stroke="#1556b8" stroke-width="0.7">W</text><path d="M12.4,14.4 L22.2,12.2 L23,17.2 L14.6,20.8 Z" fill="#fbfcfe" stroke="#1c4c9e" stroke-opacity="0.35" stroke-width="0.5"/></svg>
<svg class="r" style="left:578px;top:735px;" width="24" height="24" viewBox="0 0 24 24"><defs><linearGradient id="og" x1="0" y1="0" x2="0.25" y2="1"><stop offset="0" stop-color="#fbd062"/><stop offset="0.55" stop-color="#f6b02e"/><stop offset="1" stop-color="#ffffff"/></linearGradient></defs><path d="M6,1 H21.4 V22.4 H0.8 V6.2 Q0.8,1 6,1 Z" fill="url(#og)" stroke="#c47c08" stroke-width="1"/><path d="M6.2,2.2 H20.2 V21.2 H2 V6.4 Q2,2.2 6.2,2.2 Z" fill="none" stroke="#ffffff" stroke-opacity="0.55" stroke-width="0.8"/><path d="M2,17.4 L13,13 L20.6,18.2 V21.4 H2 Z" fill="#ffffff" opacity="0.9"/><ellipse cx="8.6" cy="10.2" rx="4.2" ry="5.4" fill="#fff4d8" stroke="#e8820e" stroke-width="3"/><circle cx="19.6" cy="10.4" r="3.1" fill="#fdeec6" stroke="#e39a24" stroke-width="0.7"/><path d="M19.6,8.8 V10.6 L20.8,11.2" stroke="#c0392b" stroke-width="0.7" fill="none"/><path d="M12.4,14.4 L22.2,12.2 L23,17.2 L14.6,20.8 Z" fill="#fbfcfe" stroke="#c47c08" stroke-opacity="0.35" stroke-width="0.5"/></svg>
<svg class="r" style="left:626px;top:735px;" width="24" height="24" viewBox="0 0 24 24"><defs><linearGradient id="xg" x1="0" y1="0" x2="0.25" y2="1"><stop offset="0" stop-color="#cfe9cf"/><stop offset="0.55" stop-color="#63b567"/><stop offset="1" stop-color="#ffffff"/></linearGradient></defs><path d="M6,1 H21.4 V22.4 H0.8 V6.2 Q0.8,1 6,1 Z" fill="url(#xg)" stroke="#1c7a2b" stroke-width="1"/><path d="M6.2,2.2 H20.2 V21.2 H2 V6.4 Q2,2.2 6.2,2.2 Z" fill="none" stroke="#ffffff" stroke-opacity="0.55" stroke-width="0.8"/><path d="M2,17.4 L13,13 L20.6,18.2 V21.4 H2 Z" fill="#ffffff" opacity="0.9"/><path d="M14.8,4.4 L10.2,10.7" stroke="#4eae4e" stroke-width="3.4"/><path d="M10.2,10.7 L5.6,17" stroke="#1b6e2a" stroke-width="3.4"/><path d="M5.6,4.4 L14.8,17" stroke="#3a9f3c" stroke-width="3.4"/><path d="M12.4,14.4 L22.2,12.2 L23,17.2 L14.6,20.8 Z" fill="#fbfcfe" stroke="#1c7a2b" stroke-opacity="0.35" stroke-width="0.5"/></svg>
<svg class="r" style="left:674px;top:735px;" width="26" height="25" viewBox="0 0 26 25"><path d="M1,4 V14.6 A6.6,2.8 0 0 0 14.2,14.6 V4 Z" fill="#f3b535"/><ellipse cx="7.6" cy="4" rx="6.6" ry="2.8" fill="#fbe3a8"/><path d="M17.4,2 H23 V7.6" fill="none" stroke="#35a853" stroke-width="1.6"/><path d="M1.6,18 V23.6 H7.2" fill="none" stroke="#35a853" stroke-width="1.6"/><path d="M11,13.4 L23.6,23.6 M23,13.6 L11.4,23.8" stroke="#9c9c9c" stroke-width="2.2"/><circle cx="23.2" cy="13.2" r="2.2" fill="none" stroke="#9c9c9c" stroke-width="1.5"/><circle cx="11" cy="13.2" r="1.6" fill="#9c9c9c"/></svg>
<svg class="r" style="left:723px;top:735px;" width="25" height="25" viewBox="0 0 25 25"><defs><linearGradient id="rg" x1="0" y1="0" x2="1" y2="1"><stop offset="0" stop-color="#6fa4f2"/><stop offset="0.45" stop-color="#1846cf"/><stop offset="1" stop-color="#0b2d9a"/></linearGradient></defs><path d="M1,1.4 L21,3.4 L20.4,16.4 L2.4,13.8 Z" fill="url(#rg)" stroke="#a9b3c4" stroke-width="1.3"/><path d="M8.4,15.4 L13.4,16 V19.6 H8 Z" fill="#cfd3da"/><ellipse cx="11" cy="21.4" rx="6.2" ry="2.4" fill="#d9dce2"/><circle cx="18.4" cy="18.4" r="5.2" fill="#e3e6e6" stroke="#9aa39a" stroke-width="0.8"/><path d="M15.8,16.4 L17.8,18.4 L15.8,20.4 M21,16.4 L19,18.4 L21,20.4" stroke="#2f8a3a" stroke-width="1.3" fill="none"/></svg>
<svg class="r" style="left:770px;top:736px;" width="24" height="24" viewBox="0 0 24 24"><circle cx="12" cy="11.8" r="11" fill="#dd4b3e"/><path d="M12,11.8 L2.47,6.3 A11,11 0 0 0 12,22.8 L16.2,14.3 Z" fill="#1da362"/><path d="M12,11.8 L12,22.8 A11,11 0 0 0 21.53,6.3 L12,6.3 Z" fill="#fecf3f"/><path d="M12,6.3 H21.53 A11,11 0 0 0 2.47,6.3 L7.2,14.5 Z" fill="#dd4b3e"/><circle cx="12" cy="11.8" r="5.2" fill="#f4f4f4"/><circle cx="12" cy="11.8" r="4.1" fill="#4d8cf5"/></svg>
<svg class="r" style="left:817px;top:741px;" width="24" height="14" viewBox="0 0 24 14"><path d="M17,2.8 H4.4 Q2.6,2.8 2.6,4.4 V5.6 Q2.6,7.2 4.4,7.2 H14 Q15.8,7.2 15.8,8.8 V10 Q15.8,11.6 14,11.6 H1.4" fill="none" stroke="#1182cc" stroke-width="2.7"/><path d="M18.6,1.4 H22.8 V13 H19.8 V4 H18.6 Z" fill="#e3111c"/></svg>
<svg class="r" style="left:866px;top:737px;" width="26" height="24" viewBox="0 0 26 24"><circle cx="11.4" cy="11.2" r="10.4" fill="#fff"/><circle cx="11.4" cy="11.2" r="8.6" fill="#189fdb"/><text x="11.4" y="17" text-anchor="middle" font-family="Liberation Sans" font-weight="bold" font-size="16" fill="#fff">?</text><circle cx="19.4" cy="15.6" r="5" fill="#f4a522" stroke="#fff" stroke-width="0.6"/><rect x="18.7" y="12.6" width="1.5" height="6" fill="#fff"/></svg>
<svg class="r" style="left:953px;top:739.5px;" width="26" height="17" viewBox="0 0 26 17"><g fill="none" stroke="#f2f2f2" stroke-width="1.4"><path d="M2.6,1.2 H20.2 Q21.6,1.2 21.6,2.6 V15.2 H2.6 Q1,15.2 1,13.6 V2.8 Q1,1.2 2.6,1.2 Z"/><path d="M21.6,4.2 H23.8 V13.4 Q23.8,15.2 21.6,15.2"/><rect x="4" y="6.8" width="5.6" height="5.4"/><path d="M3.6,4.2 H19 M12.4,7 H19 M12.4,9.5 H19 M12.4,12 H19" stroke-width="1.2"/></g></svg>
<svg class="r" style="left:998px;top:744px;" width="14" height="8" viewBox="0 0 14 8"><path d="M1,7 L7,1.2 L13,7" fill="none" stroke="#f2f2f2" stroke-width="1.5"/></svg>
<svg class="r" style="left:1030px;top:739px;" width="14" height="18" viewBox="0 0 14 18"><rect x="0.8" y="0.8" width="12.2" height="16.2" rx="6.1" fill="#1684e3"/><path d="M3.8,5.6 L9.8,11.6 L6.9,14.4 V3.4 L9.8,6.2 L3.8,12.2" fill="none" stroke="#fff" stroke-width="1.2"/></svg>
<svg class="r" style="left:1062px;top:739px;" width="15" height="18" viewBox="0 0 15 18"><g fill="none" stroke="#f2f2f2" stroke-width="1.4"><rect x="2" y="5" width="7.8" height="7.8" rx="1.8"/><path d="M10,8 L13.2,6.2 V11.6 L10,9.8"/><path d="M2.8,2.6 Q5.9,0.4 9,2.6 M2.8,15.2 Q5.9,17.4 9,15.2" stroke="#cfcfcf" stroke-width="1.1"/></g></svg>
<svg class="r" style="left:1092px;top:742px;" width="19" height="13" viewBox="0 0 19 13"><g fill="none" stroke="#f2f2f2" stroke-width="1.3"><rect x="5.6" y="2.6" width="10.4" height="7.6"/><path d="M16,5 H17.2 V8 H16"/><path d="M2,1.4 V3.4 M4.4,1.4 V3.4 M1.2,3.6 H5.2 V5.4 Q5.2,7 3.2,7 Q1.2,7 1.2,5.4 Z M3.2,7 V9.6 H5.6" stroke-width="1"/></g><rect x="7.6" y="4.6" width="6.8" height="3.8" fill="#f2f2f2"/></svg>
<svg class="r" style="left:1124px;top:741px;" width="19" height="15" viewBox="0 0 19 15"><path d="M1,5.2 H3.6 L7,2 V13 L3.6,9.8 H1 Z" fill="none" stroke="#f2f2f2" stroke-width="1.2"/><path d="M9.4,5.2 Q10.8,7.5 9.4,9.8" fill="none" stroke="#f2f2f2" stroke-width="1.2"/><path d="M11.8,3.6 Q14.2,7.5 11.8,11.4" fill="none" stroke="#bdbdbd" stroke-width="1.1"/><path d="M14.2,2 Q17.4,7.5 14.2,13" fill="none" stroke="#8d8d8d" stroke-width="1.1"/></svg>
<svg class="r" style="left:1155px;top:739px;" width="20" height="18" viewBox="0 0 20 18"><g fill="#f2f2f2"><path d="M5.2,1.4 L8.6,3.6 L5.2,5.8 L1.8,3.6 Z M12,1.4 L15.4,3.6 L12,5.8 L8.6,3.6 Z M5.2,5.8 L8.6,8 L5.2,10.2 L1.8,8 Z M12,5.8 L15.4,8 L12,10.2 L8.6,8 Z M8.6,8.8 L11.6,10.8 L8.6,12.8 L5.6,10.8 Z"/></g><circle cx="14" cy="12.4" r="4.4" fill="#e8112d"/><path d="M12.2,10.6 L15.8,14.2 M15.8,10.6 L12.2,14.2" stroke="#fff" stroke-width="1.2"/></svg>
<svg class="r" style="left:1188px;top:741px;" width="18" height="16" viewBox="0 0 18 16"><g fill="none" stroke="#f2f2f2" stroke-width="1.3"><rect x="5.4" y="1.6" width="11.4" height="8.4"/><path d="M11.2,10 V13.4 M7.6,13.6 H14.8"/><rect x="1" y="1.6" width="3.2" height="3.2" stroke-width="1"/><path d="M2.6,4.8 V13.4 H7.6" stroke-width="1"/></g></svg>
<div class="t " style="top:741px;font-size:11.8px;line-height:15px;color:#f2f2f2;left:1224.30px;letter-spacing:-0.576px;">ΕΛ</div>
<div class="t " style="top:732px;font-size:11.8px;line-height:15px;color:#f2f2f2;left:1258.20px;letter-spacing:-0.318px;">12:13 πμ</div>
<div class="t " style="top:750px;font-size:11.8px;line-height:15px;color:#f2f2f2;left:1255.00px;letter-spacing:-0.033px;">7/10/2021</div>
<svg class="r" style="left:1324px;top:739px;" width="24" height="26" viewBox="0 0 24 26"><path d="M1,1 H17.6 V13 H6.4 L3.4,16 V13 H1 Z" fill="#f2f2f2"/><path d="M3.6,4.2 H15 M3.6,6.8 H15 M3.6,9.4 H11" stroke="#2a2a2b" stroke-width="1.2"/><circle cx="16.4" cy="16.2" r="7.2" fill="#2a2a2b" stroke="#a5a5a5" stroke-width="0.9"/><text x="16.4" y="20.2" text-anchor="middle" font-family="Liberation Sans" font-size="11.5" fill="#f2f2f2">3</text></svg>
<div class="r" style="left:1361px;top:728px;width:1px;height:40px;background:#4a4c50;"></div>
</body></html>
